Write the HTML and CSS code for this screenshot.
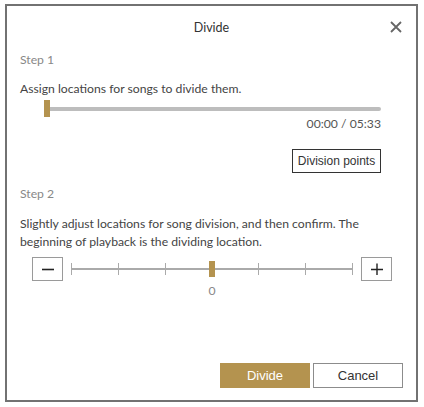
FILE: index.html
```html
<!DOCTYPE html>
<html lang="en">
<head>
<meta charset="utf-8">
<title>Divide</title>
<link rel="stylesheet" href="styles.css">
</head>
<body>
<div class="dialog">
  <header class="header">
    <span></span>
    <h1 class="title">Divide</h1>
    <button class="close" aria-label="Close">
      <svg width="12" height="12" viewBox="0 0 12 12"><path d="M1 1L11 11M11 1L1 11" stroke="#666" stroke-width="1.8" fill="none"/></svg>
    </button>
  </header>
  <section class="content">
    <div class="step">Step 1</div>
    <p class="text first">Assign locations for songs to divide them.</p>
    <div class="seek">
      <div class="seek-track"></div>
      <div class="seek-thumb"></div>
    </div>
    <div class="time">00:00 / 05:33</div>
    <div class="points-row"><button class="btn-outline">Division points</button></div>
    <div class="step step2">Step 2</div>
    <p class="text second">Slightly adjust locations for song division, and then confirm. The beginning of playback is the dividing location.</p>
    <div class="adjust">
      <button class="step-btn" aria-label="Decrease"><svg width="12" height="12" viewBox="0 0 12 12"><path d="M0 6.5H12" stroke="#222" stroke-width="1.6"/></svg></button>
      <div class="ruler">
        <span class="tick"></span><span class="tick"></span><span class="tick"></span><span class="tick"></span><span class="tick"></span><span class="tick"></span><span class="tick"></span>
        <span class="ruler-thumb"></span>
      </div>
      <button class="step-btn" aria-label="Increase"><svg width="12" height="12" viewBox="0 0 12 12"><path d="M0 6.5H12M6 0.5V12.5" stroke="#222" stroke-width="1.4"/></svg></button>
      <div class="zero">0</div>
    </div>
  </section>
  <footer class="footer">
    <button class="btn-primary">Divide</button>
    <button class="btn-cancel">Cancel</button>
  </footer>
</div>
</body>
</html>
```
FILE: styles.css
```css
* { box-sizing: border-box; }
html, body { margin: 0; padding: 0; background: #fff; }
body {
  font-family: Lato, "Noto Sans", sans-serif;
  font-size: 12.2px;
  color: #444;
}
.dialog {
  margin: 4px 0 0 5px;
  width: 413px;
  height: 398px;
  border: 2px solid #727272;
  display: flex;
  flex-direction: column;
}
.header {
  height: 42px;
  display: grid;
  grid-template-columns: 1fr auto 1fr;
  align-items: center;
}
.title {
  margin: 0;
  font-size: 12.5px;
  font-weight: normal;
  color: #333;
}
.close {
  justify-self: end;
  margin-right: 14px;
  width: 12px;
  height: 12px;
  padding: 0;
  border: 0;
  background: none;
  display: flex;
}
.content {
  padding: 0 35px 0 13px;
}
.step {
  margin-top: 3px;
  line-height: 18px;
  color: #888;
}
.step2 { margin-top: 12px; }
.text {
  margin: 0;
  line-height: 18px;
  color: #444;
}
.first { margin-top: 11px; }
.second { margin-top: 12px; }
.seek {
  position: relative;
  margin: 2px 0 0 24px;
  height: 17px;
  display: flex;
  align-items: center;
}
.seek-track {
  flex: 1;
  height: 4px;
  background: #bdbdbd;
  border-radius: 2px;
}
.seek-thumb {
  position: absolute;
  left: 0;
  top: 0;
  width: 6px;
  height: 17px;
  background: #b4934f;
}
.time {
  text-align: right;
  line-height: 14px;
  color: #555;
}
.points-row {
  display: flex;
  justify-content: flex-end;
  margin-top: 18px;
}
.btn-outline {
  width: 89px;
  height: 24px;
  padding: 0;
  border: 1px solid #333;
  background: #fff;
  font-family: "Liberation Sans", Arial, sans-serif;
  font-size: 12px;
  color: #333;
}
.adjust {
  display: grid;
  grid-template-columns: 31px 282px 31px;
  column-gap: 8px;
  margin: 6px 0 0 12px;
  align-items: center;
}
.step-btn {
  width: 31px;
  height: 24px;
  padding: 0;
  border: 1px solid #9a9a9a;
  background: #fff;
  display: flex;
  align-items: center;
  justify-content: center;
}
.ruler {
  position: relative;
  height: 12px;
  display: flex;
  justify-content: space-between;
  align-items: stretch;
  background: linear-gradient(#aaa, #aaa) center / 100% 2px no-repeat;
}
.tick {
  width: 1px;
  background: #aaa;
}
.ruler-thumb {
  position: absolute;
  left: 138px;
  top: -2px;
  width: 6px;
  height: 16px;
  background: #b4934f;
}
.zero {
  grid-column: 2;
  text-align: center;
  line-height: 14px;
  margin-top: 3px;
  color: #888;
}
.footer {
  margin-top: auto;
  display: flex;
  justify-content: flex-end;
  gap: 3px;
  padding: 0 13px 12px 0;
}
.btn-primary, .btn-cancel {
  width: 90px;
  height: 25px;
  padding: 0;
  font-family: "Liberation Sans", Arial, sans-serif;
  font-size: 13px;
}
.btn-primary {
  border: 1px solid #b4934f;
  background: #b4934f;
  color: #fff;
}
.btn-cancel {
  border: 1px solid #8c8c8c;
  background: #fff;
  color: #333;
}
```
